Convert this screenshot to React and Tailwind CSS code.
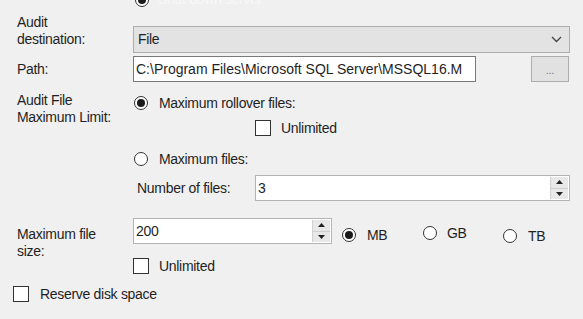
import React from "react";

function Radio({ checked }) {
  return (
    <span className="flex h-[14px] w-[14px] shrink-0 items-center justify-center rounded-full border border-[#333333] bg-white">
      {checked && <span className="h-[8px] w-[8px] rounded-full bg-[#1a1a1a]" />}
    </span>
  );
}

function Check() {
  return <span className="block h-[16px] w-[16px] shrink-0 border border-[#333333] bg-white" />;
}

function Spinner() {
  return (
    <div className="my-[1px] mr-[1px] flex w-[18px] flex-col border-l border-[#d0d0d0]">
      <div className="flex flex-1 items-center justify-center border-b border-[#cfcfcf] bg-[#e8e8e8]">
        <svg width="7" height="4" viewBox="0 0 7 4"><path d="M0 4 L3.5 0 L7 4 Z" fill="#222" /></svg>
      </div>
      <div className="flex flex-1 items-center justify-center bg-[#e8e8e8]">
        <svg width="7" height="4" viewBox="0 0 7 4"><path d="M0 0 L3.5 4 L7 0 Z" fill="#222" /></svg>
      </div>
    </div>
  );
}

export default function App() {
  return (
    <div className="h-[319px] w-[583px] overflow-hidden bg-[#f0f0f0] font-['Liberation_Sans',Arial,sans-serif] text-[14px] tracking-[-0.3px] text-[#1f1f1f]">
      {/* partially visible top row */}
      <div className="flex h-[14px] items-start overflow-hidden">
        <div className="ml-[135px] mt-[-11px] flex items-center gap-[9px]">
          <Radio checked />
          <span className="text-[#f8f8f8]">Shut down server</span>
        </div>
      </div>

      {/* Audit destination */}
      <div className="flex h-[39px] items-start">
        <div className="w-[133px] pl-[17px] leading-[17px]">
          Audit
          <br />
          destination:
        </div>
        <div className="mt-[12px] flex h-[27px] w-[437px] items-center justify-between border border-[#adadad] bg-[#e3e3e3] pl-[4px] pr-[7px]">
          <span>File</span>
          <svg width="11" height="7" viewBox="0 0 11 7">
            <path d="M1 1 L5.5 5.5 L10 1" fill="none" stroke="#444" strokeWidth="1.3" />
          </svg>
        </div>
      </div>

      {/* Path */}
      <div className="mt-[3px] flex h-[26px] items-center">
        <div className="w-[133px] pl-[17px]">Path:</div>
        <div className="flex h-full w-[343px] items-center overflow-hidden whitespace-nowrap border border-[#7a7a7a] bg-white pl-[2px] tracking-[0px]">
          C:\Program Files\Microsoft SQL Server\MSSQL16.M
        </div>
        <div className="ml-[55px] flex h-full w-[38px] items-end justify-center border border-[#adadad] bg-[#e1e1e1] pb-[5px] text-[11px] leading-none text-[#777]">
          ...
        </div>
      </div>

      {/* Audit File Maximum Limit */}
      <div className="flex items-start">
        <div className="mt-[10px] w-[133px] pl-[17px] leading-[17px]">
          Audit File
          <br />
          Maximum Limit:
        </div>
        <div className="flex flex-col">
          <div className="mt-[14px] flex h-[14px] items-center">
            <span className="ml-[1px]"><Radio checked /></span>
            <span className="ml-[11px]">Maximum rollover files:</span>
          </div>
          <div className="ml-[122px] mt-[10px] flex h-[16px] items-center">
            <Check />
            <span className="ml-[10px]">Unlimited</span>
          </div>
          <div className="mt-[16px] flex h-[14px] items-center">
            <span className="ml-[1px]"><Radio /></span>
            <span className="ml-[11px]">Maximum files:</span>
          </div>
          <div className="mt-[9px] flex h-[26px] items-center">
            <span className="ml-[4px] w-[118px]">Number of files:</span>
            <div className="flex h-full w-[315px] justify-between border border-[#b4b4b4] bg-white">
              <span className="self-center pl-[2px]">3</span>
              <Spinner />
            </div>
          </div>
        </div>
      </div>

      {/* Maximum file size */}
      <div className="mt-[17px] flex h-[26px] items-start">
        <div className="mt-[8px] w-[133px] shrink-0 pl-[17px] leading-[17px]">
          Maximum file
          <br />
          size:
        </div>
        <div className="flex h-[26px] w-[199px] justify-between border border-[#b4b4b4] bg-white">
          <span className="self-center pl-[2px]">200</span>
          <Spinner />
        </div>
        <div className="ml-[10px] flex items-start">
          <div className="mt-[10px] flex h-[14px] w-[81px] items-center">
            <Radio checked />
            <span className="ml-[11px]">MB</span>
          </div>
          <div className="mt-[8px] flex h-[14px] w-[80px] items-center">
            <Radio />
            <span className="ml-[10px]">GB</span>
          </div>
          <div className="mt-[11px] flex h-[14px] items-center">
            <Radio />
            <span className="ml-[11px]">TB</span>
          </div>
        </div>
      </div>

      {/* Unlimited */}
      <div className="ml-[133px] mt-[14px] flex h-[16px] items-center">
        <Check />
        <span className="ml-[10px]">Unlimited</span>
      </div>

      {/* Reserve disk space */}
      <div className="ml-[13px] mt-[12px] flex h-[16px] items-center">
        <Check />
        <span className="ml-[11px]">Reserve disk space</span>
      </div>
    </div>
  );
}
